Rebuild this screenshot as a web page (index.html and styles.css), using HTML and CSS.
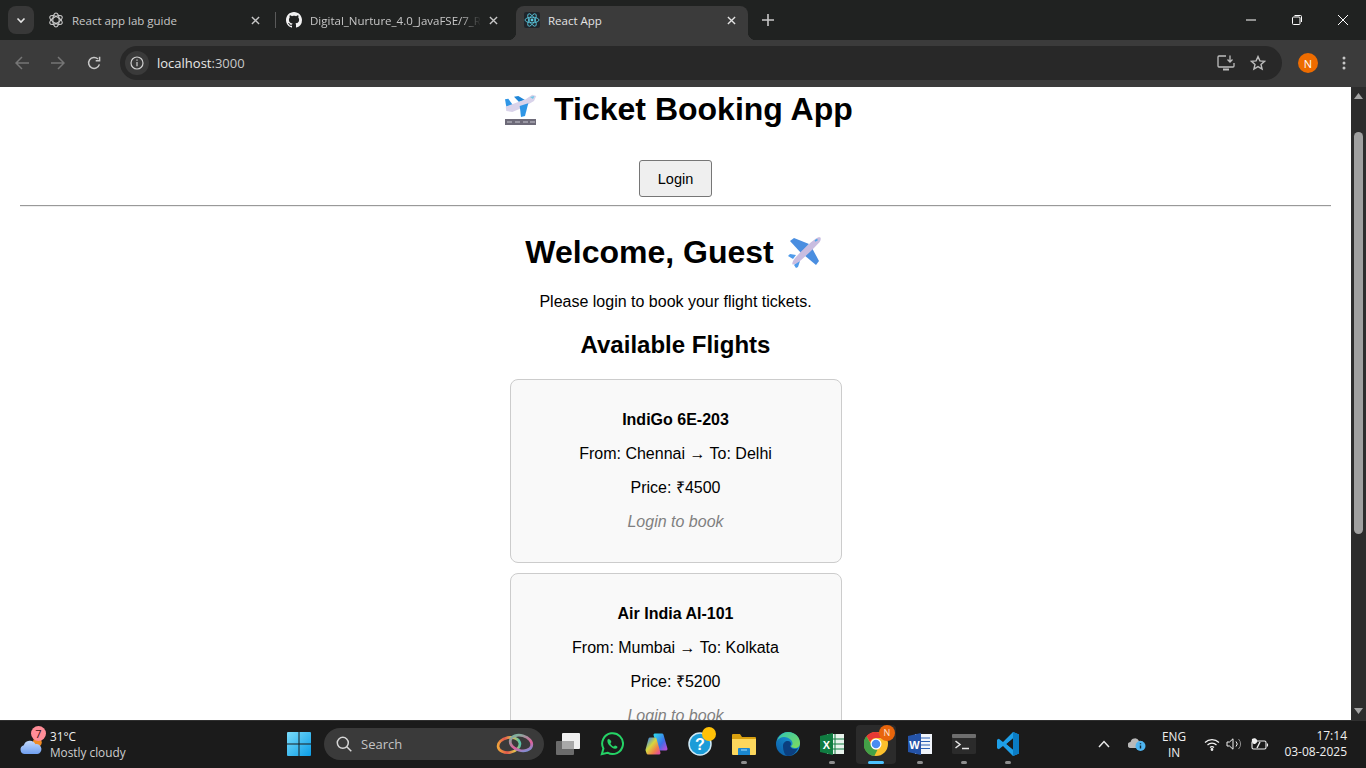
FILE: index.html
```html
<!DOCTYPE html>
<html lang="en">
<head>
    <meta charset="UTF-8">
    <meta name="viewport" content="width=device-width, initial-scale=1.0">
    <title>React App</title>
    <link rel="stylesheet" href="styles.css">
</head>
<body>

<div class="screen">

    <!-- tab strip -->
    <div class="tabstrip">
        <div class="tab-search">
            <svg width="12" height="12" viewBox="0 0 12 12"><path d="M2.5 4.5 6 8l3.5-3.5" fill="none" stroke="#e3e3e3" stroke-width="1.6"/></svg>
        </div>
        <div class="tab">
            <svg class="favicon" viewBox="0 0 16 16" fill="none" stroke="#c9c9c9" stroke-width="1.1">
                <ellipse cx="8" cy="8" rx="3.2" ry="7"/>
                <ellipse cx="8" cy="8" rx="3.2" ry="7" transform="rotate(60 8 8)"/>
                <ellipse cx="8" cy="8" rx="3.2" ry="7" transform="rotate(120 8 8)"/>
            </svg>
            <span class="tab-title">React app lab guide</span>
            <svg class="tab-close" viewBox="0 0 10 10"><path d="M1 1l8 8M9 1l-8 8" stroke="#c7c7c7" stroke-width="1.5"/></svg>
        </div>
        <div class="tab tab-sep">
            <svg class="favicon" viewBox="0 0 16 16"><path fill="#f2f2f2" d="M8 0C3.58 0 0 3.58 0 8c0 3.54 2.29 6.53 5.47 7.59.4.07.55-.17.55-.38 0-.19-.01-.82-.01-1.49-2.01.37-2.53-.49-2.69-.94-.09-.23-.48-.94-.82-1.13-.28-.15-.68-.52-.01-.53.63-.01 1.08.58 1.23.82.72 1.21 1.87.87 2.33.66.07-.52.28-.87.51-1.07-1.78-.2-3.64-.89-3.64-3.95 0-.87.31-1.59.82-2.15-.08-.2-.36-1.02.08-2.12 0 0 .67-.21 2.2.82.64-.18 1.32-.27 2-.27.68 0 1.36.09 2 .27 1.53-1.04 2.2-.82 2.2-.82.44 1.1.16 1.92.08 2.12.51.56.82 1.27.82 2.15 0 3.07-1.87 3.75-3.65 3.95.29.25.54.73.54 1.48 0 1.07-.01 1.93-.01 2.2 0 .21.15.46.55.38A8.013 8.013 0 0016 8c0-4.42-3.58-8-8-8z"/></svg>
            <span class="tab-title tab-fade">Digital_Nurture_4.0_JavaFSE/7_R</span>
            <svg class="tab-close" viewBox="0 0 10 10"><path d="M1 1l8 8M9 1l-8 8" stroke="#c7c7c7" stroke-width="1.5"/></svg>
        </div>
        <div class="tab tab-active">
            <svg class="favicon" viewBox="0 0 16 16" fill="none" stroke="#5ccfe6" stroke-width=".8">
                <rect width="16" height="16" rx="2" fill="#20252b" stroke="none"/>
                <ellipse cx="8" cy="8" rx="7" ry="2.8"/>
                <ellipse cx="8" cy="8" rx="7" ry="2.8" transform="rotate(60 8 8)"/>
                <ellipse cx="8" cy="8" rx="7" ry="2.8" transform="rotate(120 8 8)"/>
                <circle cx="8" cy="8" r="1.4" fill="#5ccfe6" stroke="none"/>
            </svg>
            <span class="tab-title">React App</span>
            <svg class="tab-close" viewBox="0 0 10 10"><path d="M1 1l8 8M9 1l-8 8" stroke="#e3e3e3" stroke-width="1.5"/></svg>
        </div>
        <div class="new-tab">
            <svg width="12" height="12" viewBox="0 0 12 12"><path d="M6 0v12M0 6h12" stroke="#c7c7c7" stroke-width="1.6"/></svg>
        </div>
        <div class="win-controls">
            <div class="win-btn"><svg width="10" height="10" viewBox="0 0 10 10"><path d="M0 5h10" stroke="#fff"/></svg></div>
            <div class="win-btn"><svg width="10" height="10" viewBox="0 0 10 10" fill="none" stroke="#fff"><rect x=".5" y="2" width="7.5" height="7.5" rx="1"/><path d="M2.5.5H8.5a1 1 0 0 1 1 1V7"/></svg></div>
            <div class="win-btn"><svg width="10" height="10" viewBox="0 0 10 10"><path d="M0 0l10 10M10 0L0 10" stroke="#fff"/></svg></div>
        </div>
    </div>

    <!-- toolbar -->
    <div class="toolbar">
        <div class="nav-btn"><svg width="14" height="14" viewBox="0 0 14 14" fill="none" stroke="#767676" stroke-width="1.5"><path d="M14 7H1.5M7 1 1 7l6 6"/></svg></div>
        <div class="nav-btn"><svg width="14" height="14" viewBox="0 0 14 14" fill="none" stroke="#767676" stroke-width="1.5"><path d="M0 7h12.5M7 1l6 6-6 6"/></svg></div>
        <div class="nav-btn"><svg width="14" height="14" viewBox="0 0 14 14" fill="none" stroke="#c7c7c7" stroke-width="1.5"><path d="M12.4 8.4A5.5 5.5 0 1 1 11 3"/><path d="M12.6.8v3.9H8.7" /></svg></div>
        <div class="omnibox">
            <div class="site-chip">
                <svg width="14" height="14" viewBox="0 0 14 14" fill="none" stroke="#d0d0d0" stroke-width="1.2"><circle cx="7" cy="7" r="6"/><path d="M7 6v4.2M7 3.6v1.2"/></svg>
            </div>
            <span class="url">localhost<span class="url-port">:3000</span></span>
            <div class="omni-icons">
                <svg width="18" height="16" viewBox="0 0 18 16" fill="none" stroke="#bdbdbd" stroke-width="1.3"><path d="M9 1H2a1 1 0 0 0-1 1v9a1 1 0 0 0 1 1h14a1 1 0 0 0 1-1V8"/><path d="M6 14.5h6" stroke-width="2"/><path d="M13 .5v6M10.5 4.5 13 7l2.500-2.500"/></svg>
                <svg width="16" height="16" viewBox="0 0 16 16" fill="none" stroke="#bdbdbd" stroke-width="1.4"><path d="M8 1.600 9.900 5.900l4.700.4-3.600 3.100 1.100 4.600L8 11.600 3.900 14l1.100-4.600L1.400 6.300l4.700-.4z"/></svg>
            </div>
        </div>
        <div class="avatar">N</div>
        <svg class="menu-dots" width="4" height="14" viewBox="0 0 4 14" fill="#c7c7c7"><circle cx="2" cy="2" r="1.500"/><circle cx="2" cy="7" r="1.500"/><circle cx="2" cy="12" r="1.500"/></svg>
    </div>

    <!-- page -->
    <div class="viewport">
        <div class="page">
            <h1><svg class="emoji" viewBox="1 0 43 40">
                <path d="M8 27h31v6H8z" fill="#6d6a78"/>
                <path d="M10 30h5M18 30h5M26 30h5M33 30h5" stroke="#c8c6d0" stroke-width="1.200"/>
                <path d="M8 7.300 11.300 6.700 16 13.300 9.300 14.700z" fill="#2f96e6"/>
                <path d="M17 4.700 21.300 4 28 8 22 10z" fill="#1f86d8"/>
                <path d="M8.700 14.700 28.700 7.300 35.300 2.700 39.300 4 37 9 25.300 15.700 15.300 20 9.300 19z" fill="#d9d3ea"/>
                <path d="M22.700 14 31.300 11.300 28 24 24 25z" fill="#2f96e6"/>
                <path d="M33 5l4.500-1-1.500 3z" fill="#6fc8e8"/>
            </svg> Ticket Booking App</h1>
            <button class="login-btn">Login</button>
            <hr class="divider">
            <h2 class="welcome">Welcome, Guest <svg class="emoji" viewBox="0 0 43 40">
                <path d="M7 6l4-3 15 6-8 9z" fill="#4a8ee0"/>
                <path d="M21 20l8-7 7 13-3 4z" fill="#4a8ee0"/>
                <path d="M5 21l2-2 6 1-3 4z" fill="#4f9bea"/>
                <path d="M14 27l-3 3 2 3 2-1 2-6z" fill="#4f9bea"/>
                <path d="M33 3.500c2-1.200 4-1.500 4.500-.8s.2 2.700-1 4.500C31 13 25 19 17 26c-2.500 2-6 4-7.500 3.500-.8-1.500 1-5 3.500-7.500C19 15.500 26 8.500 33 3.500z" fill="#c9bde0"/>
                <path d="M32 6l2.500-1.500" stroke="#4aa6e8" stroke-width="1.500"/>
            </svg></h2>
            <p>Please login to book your flight tickets.</p>
            <h3 class="section-title">Available Flights</h3>

            <div class="flight-card">
                <p><strong>IndiGo 6E-203</strong></p>
                <p>From: Chennai → To: Delhi</p>
                <p>Price: ₹4500</p>
                <p class="login-note">Login to book</p>
            </div>
            <div class="flight-card">
                <p><strong>Air India AI-101</strong></p>
                <p>From: Mumbai → To: Kolkata</p>
                <p>Price: ₹5200</p>
                <p class="login-note">Login to book</p>
            </div>
        </div>
        <div class="scrollbar">
            <svg width="9" height="6" viewBox="0 0 9 6"><path d="M4.500 0 9 6H0z" fill="#a3a3a3"/></svg>
            <div class="scroll-thumb"></div>
            <svg class="scroll-down" width="9" height="6" viewBox="0 0 9 6"><path d="M4.500 6 9 0H0z" fill="#a3a3a3"/></svg>
        </div>
    </div>

    <!-- windows taskbar -->
    <div class="taskbar">
        <div class="weather">
            <div class="weather-icon">
                <svg width="26" height="18" viewBox="0 0 26 20"><defs><linearGradient id="cloud" x1="0" y1="0" x2="0" y2="1"><stop offset="0" stop-color="#c3d9fb"/><stop offset="1" stop-color="#6f9ff0"/></linearGradient></defs><circle cx="20" cy="6" r="5" fill="#f08a24"/><path d="M6 19a5 5 0 0 1-1-9.800A7 7 0 0 1 18 8a5.500 5.500 0 0 1 2 11z" fill="url(#cloud)"/></svg>
                <span class="weather-badge">7</span>
            </div>
            <div class="weather-text">
                <div class="temp">31°C</div>
                <div class="cond">Mostly cloudy</div>
            </div>
        </div>

        <div class="task-cell">
            <svg width="24" height="24" viewBox="0 0 24 24"><defs><linearGradient id="win" x1="0" y1="0" x2="1" y2="1"><stop offset="0" stop-color="#7adcfb"/><stop offset="1" stop-color="#0b9de6"/></linearGradient></defs><path fill="url(#win)" d="M0 1a1 1 0 0 1 1-1h10.500v11.500H0zM12.500 0H23a1 1 0 0 1 1 1v10.500H12.500zM0 12.500h11.500V24H1a1 1 0 0 1-1-1zM12.500 12.500H24V23a1 1 0 0 1-1 1H12.500z"/></svg>
        </div>
        <div class="search-box">
            <svg width="16" height="16" viewBox="0 0 16 16" fill="none" stroke="#d6d6d6" stroke-width="1.500"><circle cx="6.800" cy="6.800" r="5.500"/><path d="m10.800 10.800 4.500 4.500"/></svg>
            <span class="search-label">Search</span>
            <svg class="search-art" width="38" height="22" viewBox="0 0 38 22" fill="none" stroke-width="2.700"><defs><linearGradient id="ring1" x1="0" y1="0" x2="1" y2="0"><stop offset="0" stop-color="#f0a33c"/><stop offset=".35" stop-color="#e2574c"/><stop offset=".7" stop-color="#e8c04a"/><stop offset="1" stop-color="#59c2a8"/></linearGradient><linearGradient id="ring2" x1="0" y1="0" x2="1" y2="1"><stop offset="0" stop-color="#67c7a0"/><stop offset=".6" stop-color="#e05f9a"/><stop offset="1" stop-color="#5aa0e8"/></linearGradient></defs><ellipse cx="13" cy="12" rx="11" ry="7.500" stroke="url(#ring1)" transform="rotate(-10 13 12)"/><ellipse cx="25" cy="10" rx="11" ry="7.500" stroke="url(#ring2)" transform="rotate(15 25 10)"/></svg>
        </div>

        <div class="task-cell">
            <svg width="24" height="22" viewBox="0 0 24 22"><rect x="0" y="8" width="18" height="14" rx="1" fill="#6b6b6b"/><rect x="6" y="0" width="18" height="16" rx="1" fill="#f0f0f0"/><rect x="6" y="8" width="12" height="8" fill="#a9a9a9"/></svg>
        </div>
        <div class="task-cell">
            <svg width="24" height="24" viewBox="0 0 24 24" fill="none"><path d="M1.800 22.200 3.400 16.500A10.400 10.400 0 1 1 7.500 20.700z" stroke="#25d366" stroke-width="2"/><path d="M8.700 6.800c-.5 0-1.300.7-1.300 2.200 0 3 3.900 7.200 7.600 7.800 1.500.2 2.500-.9 2.500-1.700 0-.5-2.100-1.700-2.500-1.500-.5.200-.8 1.100-1.300 1-1.200-.3-2.800-1.900-3.200-3.100-.1-.5.800-.9.900-1.400.1-.5-1-2.800-2.700-2.800z" fill="#25d366"/></svg>
        </div>
        <div class="task-cell">
            <svg width="24" height="24" viewBox="0 0 24 24" stroke-width="3" stroke-linejoin="round"><defs><linearGradient id="cop1" x1="0" y1="0" x2="1" y2="1"><stop offset="0" stop-color="#2fd0ee"/><stop offset=".6" stop-color="#3d6fe8"/><stop offset="1" stop-color="#b04fd8"/></linearGradient><linearGradient id="cop2" x1="0" y1="0" x2="1" y2="1"><stop offset="0" stop-color="#3b8ae8"/><stop offset=".4" stop-color="#d6d83c"/><stop offset=".75" stop-color="#f0804a"/><stop offset="1" stop-color="#e0509a"/></linearGradient></defs><path d="M11 3h7l4 14h-6z" fill="url(#cop1)" stroke="url(#cop1)"/><path d="M6 7h5l4 14H4L3 18z" fill="url(#cop2)" stroke="url(#cop2)"/></svg>
        </div>
        <div class="task-cell">
            <svg class="help-icon" width="30" height="30" viewBox="0 0 30 30"><circle cx="15" cy="15" r="11" fill="#1b9cd8" stroke="#cfe9f6" stroke-width="1.500"/><text x="15" y="21" class="help-mark">?</text><circle cx="24" cy="5" r="7" fill="#ffc107"/></svg>
        </div>
        <div class="task-cell running">
            <svg width="24" height="22" viewBox="0 0 24 22"><path d="M0 2a1 1 0 0 1 1-1h7l2 3h13a1 1 0 0 1 1 1v3H0z" fill="#d9a00f"/><path d="M0 6h24v15a1 1 0 0 1-1 1H1a1 1 0 0 1-1-1z" fill="#fcd75c"/><path d="M7 15h10a1 1 0 0 1 1 1v6H6v-6a1 1 0 0 1 1-1z" fill="#1a87d0"/><path d="M9 17h6" stroke="#8fd0f5" stroke-width="1.200"/></svg>
        </div>
        <div class="task-cell">
            <svg width="24" height="24" viewBox="0 0 24 24"><defs><linearGradient id="edge1" x1="0" y1="1" x2="1" y2="0"><stop offset="0" stop-color="#0c59a4"/><stop offset="1" stop-color="#1aa6e0"/></linearGradient><linearGradient id="edge2" x1="0" y1="0" x2="1" y2="1"><stop offset="0" stop-color="#30c5b0"/><stop offset="1" stop-color="#7fdc5c"/></linearGradient></defs><circle cx="12" cy="12" r="12" fill="url(#edge1)"/><path d="M1 9C3 3 8 0 12 0c7 0 12 5 12 11 0 3-2 5-5 5-2 0-4-1-4-2 2-1 2-4 0-6C11 4 4 4 1 9z" fill="url(#edge2)"/><path d="M7 14c0-3 2-5 5-5 2 0 3 1.500 3 3 0 1-1 2-1 2 1 3 5 4 8 2-2 5-6 8-10 8-3 0-5-5-5-10z" fill="#0b3f7f"/></svg>
        </div>
        <div class="task-cell running">
            <svg width="24" height="22" viewBox="0 0 24 22"><rect x="7" y="1" width="17" height="20" fill="#e8f3ec"/><path d="M15 1v20M7 6h17M7 11h17M7 16h17" stroke="#107c41" stroke-width="1"/><path d="M0 3l13-3v22L0 19z" fill="#107c41"/><text x="6.500" y="15.500" class="office-letter">X</text></svg>
        </div>
        <div class="task-cell running is-active">
            <div class="chrome-icon">
                <svg width="24" height="24" viewBox="0 0 24 24"><circle cx="12" cy="12" r="12" fill="#fbc02d"/><path d="M12 0a12 12 0 0 1 10.400 6H12a6 6 0 0 0-5.800 4.500L2.400 4.200A12 12 0 0 1 12 0z" fill="#e53935"/><path d="M2.400 4.200 7.500 13a6 6 0 0 0 6 4.800L10.300 23.900A12 12 0 0 1 2.400 4.200z" fill="#43a047"/><circle cx="12" cy="12" r="5.500" fill="#fff"/><circle cx="12" cy="12" r="4.300" fill="#4a8cf0"/></svg>
                <span class="chrome-badge">N</span>
            </div>
        </div>
        <div class="task-cell running">
            <svg width="24" height="22" viewBox="0 0 24 22"><rect x="7" y="1" width="17" height="20" fill="#f1f5fb"/><path d="M13 5h9M13 8.500h9M13 12h9M13 15.500h9" stroke="#2b5fb4" stroke-width="1.200"/><path d="M0 3l13-3v22L0 19z" fill="#2453a8"/><text x="6.500" y="15.500" class="office-letter">W</text></svg>
        </div>
        <div class="task-cell running">
            <svg width="24" height="20" viewBox="0 0 24 20"><rect width="24" height="20" rx="1.500" fill="#2b2b2b"/><rect width="24" height="4" rx="1" fill="#6e6e6e"/><path d="M3.500 7l4.500 3.500L3.500 14" fill="none" stroke="#e6e6e6" stroke-width="1.500"/><path d="M10 14.500h7" stroke="#e6e6e6" stroke-width="1.500"/></svg>
        </div>
        <div class="task-cell running">
            <svg width="24" height="24" viewBox="0 0 24 24"><path d="M17 0 7 10 2.800 6.700 1 7.700v8.600l1.800 1L7 14l10 10 6-2.500V2.500zM17 6.500v11L10.500 12z" fill="#1e9fe8"/><path d="M17 0l6 2.500v19L17 24z" fill="#0a7cc4"/><path d="M17 6.500v11L10.500 12z" fill="#1c1c1c"/></svg>
        </div>

        <div class="tray">
            <svg class="tray-chevron" width="12" height="8" viewBox="0 0 12 8" fill="none" stroke="#e8e8e8" stroke-width="1.500"><path d="M1 7l5-5.500L11 7"/></svg>
            <svg class="tray-onedrive" width="18" height="14" viewBox="0 0 18 14"><path d="M3 11a3 3 0 0 1-.5-6A4.500 4.500 0 0 1 11 4a3.500 3.500 0 0 1 2 7z" fill="#b9b9b9"/><circle cx="12.500" cy="9" r="5" fill="#4db4f0"/><path d="M12.500 8.500v3M12.500 6.200v1" stroke="#10222e" stroke-width="1.400"/></svg>
            <div class="lang"><div>ENG</div><div>IN</div></div>
            <svg class="tray-wifi" width="16" height="13" viewBox="0 0 16 13" fill="none" stroke="#f0f0f0" stroke-width="1.200"><path d="M1 4.500a10 10 0 0 1 14 0"/><path d="M3.500 7a6.500 6.500 0 0 1 9 0"/><path d="M6 9.500a3 3 0 0 1 4 0"/><circle cx="8" cy="11.500" r=".8" fill="#f0f0f0"/></svg>
            <svg class="tray-volume" width="16" height="14" viewBox="0 0 16 14" fill="none" stroke="#f0f0f0" stroke-width="1"><path d="M1 5h2.500L7 1.800v10.400L3.500 9H1z"/><path d="M10 4.500a3.500 3.500 0 0 1 0 5"/><path d="M12.500 2a7 7 0 0 1 0 10" stroke="#8a8a8a"/></svg>
            <svg class="tray-battery" width="18" height="14" viewBox="0 0 18 14" fill="none" stroke="#f0f0f0" stroke-width="1.100"><rect x="1" y="4" width="14" height="8" rx="1.500"/><path d="M16.500 6.500v3"/><path d="M1 2c2-1.500 4-1 5 1 .8 2-1 4-3 4-1.500 0-2.500-3-2-5z" fill="#f0f0f0" stroke="none"/><path d="M9 5 6 11" stroke-width="1.400"/></svg>
            <div class="clock"><div>17:14</div><div>03-08-2025</div></div>
        </div>
    </div>
</div>

</body>
</html>
```

FILE: styles.css
```css
html, body {
    margin: 0;
    height: 100%;
    overflow: hidden;
}
.screen {
    display: flex;
    flex-direction: column;
    height: 768px;
    background: white;
}

/* tab strip */
.tabstrip {
    display: flex;
    align-items: flex-end;
    flex: none;
    height: 40px;
    padding-left: 8px;
    background: #202221;
    font-family: "Open Sans", sans-serif;
    font-size: 11.5px;
    color: #c7c7c7;
}
.tab-search {
    display: flex;
    align-items: center;
    justify-content: center;
    align-self: flex-start;
    width: 26px;
    height: 28px;
    margin: 6px 6px 0 0;
    border-radius: 8px;
    background: #383838;
}
.tab {
    display: flex;
    align-items: center;
    position: relative;
    box-sizing: border-box;
    width: 238px;
    height: 34px;
    padding: 0 18px 6px 8px;
}
.tab-sep::before {
    content: "";
    position: absolute;
    left: -3px;
    top: 6px;
    width: 1px;
    height: 16px;
    background: #5a5a5a;
}
.tab-active {
    width: 232px;
    padding-right: 12px;
    border-radius: 8px 8px 0 0;
    background: #3b3b3b;
    color: #e3e3e3;
}
.tab-active::before,
.tab-active::after {
    content: "";
    position: absolute;
    bottom: 0;
    width: 8px;
    height: 8px;
}
.tab-active::before {
    left: -8px;
    background: radial-gradient(circle at 0 0, transparent 8px, #3b3b3b 8.5px);
}
.tab-active::after {
    right: -8px;
    background: radial-gradient(circle at 100% 0, transparent 8px, #3b3b3b 8.5px);
}
.favicon {
    flex: none;
    width: 16px;
    height: 16px;
    margin-right: 8px;
}
.tab-title {
    flex: 1;
    overflow: hidden;
    white-space: nowrap;
}
.tab-fade {
    -webkit-mask-image: linear-gradient(to right, black 88%, transparent 100%);
    mask-image: linear-gradient(to right, black 88%, transparent 100%);
}
.tab-close {
    flex: none;
    width: 9px;
    height: 9px;
    margin-left: 8px;
}
.new-tab {
    display: flex;
    align-items: center;
    justify-content: center;
    width: 28px;
    height: 34px;
    margin-left: 6px;
    padding-bottom: 6px;
    box-sizing: border-box;
}
.win-controls {
    display: flex;
    align-self: stretch;
    margin-left: auto;
}
.win-btn {
    display: flex;
    align-items: center;
    justify-content: center;
    width: 46px;
}

/* toolbar */
.toolbar {
    display: flex;
    align-items: center;
    flex: none;
    height: 47px;
    padding: 0 8px 1px 4px;
    box-sizing: border-box;
    background: #3b3b3b;
}
.nav-btn {
    display: flex;
    align-items: center;
    justify-content: center;
    width: 36px;
    height: 34px;
}
.omnibox {
    display: flex;
    align-items: center;
    flex: 1;
    height: 34px;
    margin-left: 8px;
    padding: 0 16px 0 5px;
    border-radius: 17px;
    background: #282828;
    font-family: "Open Sans", sans-serif;
    font-size: 13px;
    color: #e8e8e8;
}
.site-chip {
    display: flex;
    align-items: center;
    justify-content: center;
    width: 24px;
    height: 24px;
    margin-right: 8px;
    border-radius: 50%;
    background: #3a3a3a;
}
.url-port {
    color: #c8c8c8;
}
.omni-icons {
    display: flex;
    align-items: center;
    gap: 15px;
    margin-left: auto;
}
.avatar {
    display: flex;
    align-items: center;
    justify-content: center;
    width: 20px;
    height: 20px;
    margin: 0 24px 0 16px;
    border-radius: 50%;
    background: #ee6c00;
    font-family: "Open Sans", sans-serif;
    font-size: 11px;
    color: white;
}
.menu-dots {
    margin-right: 12px;
}

/* page */
.viewport {
    display: flex;
    flex: 1;
    min-height: 0;
}
.page {
    flex: 1;
    box-sizing: border-box;
    padding: 4px 20px 0;
    overflow: hidden;
    text-align: center;
    font-family: "Liberation Sans", Arial, sans-serif;
    font-size: 16px;
    color: black;
}
.page h1, .welcome {
    margin: 0;
    font-size: 32px;
    line-height: 37px;
    font-weight: bold;
}
.emoji {
    width: 43px;
    height: 40px;
    margin: -4px 0;
    vertical-align: -8px;
}
.page h1 .emoji {
    margin-right: 4px;
}
.login-btn {
    display: block;
    box-sizing: border-box;
    width: 73px;
    height: 37px;
    margin: 32px auto 0;
    padding: 1px 0 0;
    border: 1px solid #767676;
    border-radius: 3px;
    background: #efefef;
    font-family: inherit;
    font-size: 14.5px;
    color: black;
}
.divider {
    height: 0;
    margin: 8px 0 27px;
    border: none;
    border-top: 1px solid #999;
    border-bottom: 1px solid #eee;
}
.page p {
    margin: 16px 0;
    line-height: 18px;
}
.welcome + p {
    margin-top: 22px;
}
.section-title {
    margin: 20px 0;
    font-size: 24px;
    line-height: 28px;
}
.flight-card {
    width: 300px;
    margin: 10px auto;
    padding: 15px;
    border: 1px solid #ccc;
    border-radius: 8px;
    background: #f9f9f9;
}
.login-note {
    font-style: italic;
    color: gray;
}

/* scrollbar */
.scrollbar {
    display: flex;
    flex-direction: column;
    align-items: center;
    flex: none;
    box-sizing: border-box;
    width: 15px;
    padding: 6px 0;
    background: #2c2c2c;
}
.scroll-thumb {
    width: 9px;
    height: 402px;
    margin-top: 33px;
    border-radius: 5px;
    background: #a0a0a0;
}
.scroll-down {
    margin-top: auto;
}

/* taskbar */
.taskbar {
    display: flex;
    align-items: center;
    flex: none;
    box-sizing: border-box;
    height: 48px;
    padding-bottom: 1px;
    border-top: 1px solid #303030;
    background: #1b1b1b;
    font-family: "Open Sans", sans-serif;
    font-size: 12px;
    color: #f0f0f0;
}
.weather {
    display: flex;
    align-items: center;
    flex: none;
    box-sizing: border-box;
    width: 277px;
    padding-left: 18px;
}
.weather-icon {
    position: relative;
    display: flex;
    align-items: flex-end;
    box-sizing: border-box;
    height: 30px;
    padding-bottom: 4px;
    margin-right: 6px;
}
.weather-badge {
    position: absolute;
    left: 13px;
    top: -3px;
    width: 15px;
    height: 15px;
    border-radius: 50%;
    background: #ff8d98;
    color: #3a1014;
    font-size: 11px;
    line-height: 15px;
    text-align: center;
}
.temp {
    font-size: 11.8px;
    line-height: 16px;
}
.cond {
    font-size: 11.8px;
    line-height: 16px;
    color: #cfcfcf;
}
.task-cell {
    position: relative;
    display: flex;
    align-items: center;
    justify-content: center;
    flex: none;
    width: 44px;
    height: 47px;
}
.running::after {
    content: "";
    position: absolute;
    left: 19px;
    bottom: 4px;
    width: 6px;
    height: 3px;
    border-radius: 2px;
    background: #8e8e8e;
}
.is-active::before {
    content: "";
    position: absolute;
    left: 2px;
    top: 4px;
    width: 40px;
    height: 39px;
    border-radius: 4px;
    background: #2b2b2b;
}
.is-active::after {
    left: 14px;
    width: 16px;
    background: #4cc2ff;
}
.chrome-icon {
    position: relative;
    display: flex;
}
.chrome-badge {
    position: absolute;
    right: -7px;
    top: -7px;
    width: 16px;
    height: 16px;
    border-radius: 50%;
    background: #e8650c;
    font-size: 9px;
    line-height: 16px;
    text-align: center;
    color: #ffe3cc;
}
.help-icon {
    overflow: visible;
}
.help-mark {
    font-family: "Liberation Sans", sans-serif;
    font-size: 16px;
    font-weight: bold;
    fill: white;
    text-anchor: middle;
}
.office-letter {
    font-family: "Liberation Sans", sans-serif;
    font-size: 11px;
    font-weight: bold;
    fill: white;
    text-anchor: middle;
}
.search-box {
    display: flex;
    align-items: center;
    flex: none;
    box-sizing: border-box;
    width: 220px;
    height: 32px;
    margin: 0 2px 0 3px;
    padding: 0 10px 0 12px;
    border-radius: 16px;
    background: #3a3a3a;
}
.search-label {
    margin-left: 9px;
    font-size: 13px;
    color: #c4c4c4;
}
.search-art {
    margin-left: auto;
}
.tray {
    display: flex;
    align-items: center;
    flex: 1;
    padding-right: 19px;
}
.tray-chevron {
    margin-left: 68px;
}
.tray-onedrive {
    margin-left: 18px;
}
.lang {
    width: 32px;
    margin-left: 12px;
    font-size: 11.8px;
    text-align: center;
    line-height: 16px;
}
.tray-wifi {
    margin-left: 14px;
}
.tray-volume {
    margin-left: 6px;
}
.tray-battery {
    margin-left: 9px;
}
.clock {
    margin-left: auto;
    text-align: right;
    line-height: 16px;
}
```
